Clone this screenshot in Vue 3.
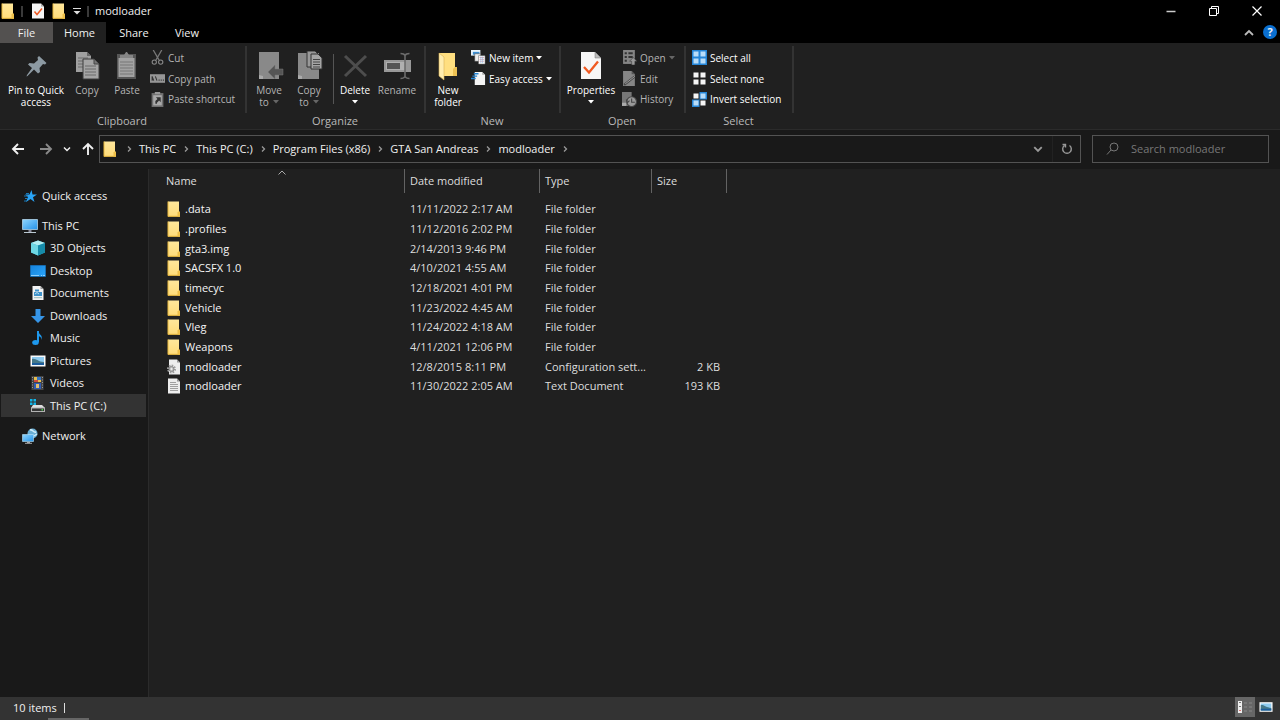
<script setup>
import { ref } from 'vue'

const search = ref('')
const tabs = ['File', 'Home', 'Share', 'View']
const crumbs = ['This PC', 'This PC (C:)', 'Program Files (x86)', 'GTA San Andreas', 'modloader']

const groups = [
  {
    name: 'Clipboard', cls: 'clipboard',
    large: [
      { icon: 'pin', lines: ['Pin to Quick', 'access'], cls: 'wide' },
      { icon: 'copy', lines: ['Copy'], dim: true },
      { icon: 'paste', lines: ['Paste'], dim: true },
    ],
    small: [
      { icon: 'cut', label: 'Cut', dim: true },
      { icon: 'path', label: 'Copy path', dim: true },
      { icon: 'shortcut', label: 'Paste shortcut', dim: true },
    ],
  },
  {
    name: 'Organize', cls: 'organize',
    large: [
      { icon: 'move', lines: ['Move', 'to'], dim: true, caret: true },
      { icon: 'copyto', lines: ['Copy', 'to'], dim: true, caret: true },
      { icon: 'delete', lines: ['Delete', ''], caret: true, cls: 'split' },
      { icon: 'rename', lines: ['Rename'], dim: true, cls: 'rename' },
    ],
    small: [],
  },
  {
    name: 'New', cls: 'new',
    large: [{ icon: 'bigfolder', lines: ['New', 'folder'] }],
    small: [
      { icon: 'newitem', label: 'New item', caret: true },
      { icon: 'easy', label: 'Easy access', caret: true },
    ],
  },
  {
    name: 'Open', cls: 'open',
    large: [{ icon: 'props', lines: ['Properties', ''], caret: true, cls: 'medium' }],
    small: [
      { icon: 'open', label: 'Open', caret: true, dim: true },
      { icon: 'edit', label: 'Edit', dim: true },
      { icon: 'history', label: 'History', dim: true },
    ],
  },
  {
    name: 'Select', cls: 'select',
    large: [],
    small: [
      { icon: 'selall', label: 'Select all' },
      { icon: 'selnone', label: 'Select none' },
      { icon: 'selinv', label: 'Invert selection' },
    ],
  },
]

const places = [
  { icon: '3d', label: '3D Objects' },
  { icon: 'desktop', label: 'Desktop' },
  { icon: 'docs', label: 'Documents' },
  { icon: 'down', label: 'Downloads' },
  { icon: 'music', label: 'Music' },
  { icon: 'pics', label: 'Pictures' },
  { icon: 'video', label: 'Videos' },
  { icon: 'drive', label: 'This PC (C:)', selected: true },
]

const files = [
  ['folder', '.data', '11/11/2022 2:17 AM', 'File folder', ''],
  ['folder', '.profiles', '11/12/2016 2:02 PM', 'File folder', ''],
  ['folder', 'gta3.img', '2/14/2013 9:46 PM', 'File folder', ''],
  ['folder', 'SACSFX 1.0', '4/10/2021 4:55 AM', 'File folder', ''],
  ['folder', 'timecyc', '12/18/2021 4:01 PM', 'File folder', ''],
  ['folder', 'Vehicle', '11/23/2022 4:45 AM', 'File folder', ''],
  ['folder', 'Vleg', '11/24/2022 4:18 AM', 'File folder', ''],
  ['folder', 'Weapons', '4/11/2021 12:06 PM', 'File folder', ''],
  ['config', 'modloader', '12/8/2015 8:11 PM', 'Configuration sett...', '2 KB'],
  ['text', 'modloader', '11/30/2022 2:05 AM', 'Text Document', '193 KB'],
]
</script>

<template>
  <div class="window">
    <svg class="sprite" aria-hidden="true">
      <linearGradient id="g-folder" x1="0" y1="0" x2="0" y2="1">
        <stop offset="0" stop-color="#ffe79b" /><stop offset="1" stop-color="#ffdc7a" />
      </linearGradient>
      <linearGradient id="g-blue" x1="0" y1="0" x2="1" y2="1">
        <stop offset="0" stop-color="#8fd6ff" /><stop offset="1" stop-color="#2492e8" />
      </linearGradient>
      <linearGradient id="g-desk" x1="0" y1="0" x2="1" y2="1">
        <stop offset="0" stop-color="#1683dc" /><stop offset="1" stop-color="#2aa5fa" />
      </linearGradient>
      <symbol id="i-folder" viewBox="0 0 14 16">
        <path d="M1 0.500h11v10.500h1v4.500H1z" fill="url(#g-folder)" />
        <path d="M1 0.500v15M1 15.300h12" stroke="#e9b93f" fill="none" />
        <path d="M10.500 15.500v-4l1-1h1.500v5z" fill="#eebf49" />
      </symbol>
      <symbol id="i-check" viewBox="0 0 14 16">
        <path d="M1 0.500h9l3 3v12H1z" fill="#f5f5f5" /><path d="M10 0.500v3h3" fill="#aaa" />
        <path d="M3.500 8.500l2.500 3 5-6" fill="none" stroke="#ef5b25" stroke-width="1.500" />
      </symbol>
      <symbol id="i-pin" viewBox="0 0 30 30">
        <path d="M18 5l7.500 7-1.500 1.500-2-.5-3.500 4 .5 4-2 1.500-4-4L6.500 25l-1 .5.500-1.500 5-7-4-3.500 1.500-1.500 4.500.5 4-3.500-.5-2.500z" fill="#8d9aa3" />
      </symbol>
      <symbol id="i-copy" viewBox="0 0 30 30">
        <path d="M4 1h11l4 4v16H4z" fill="#a0a0a0" /><path d="M15 1v4h4" fill="#666" />
        <path d="M6 7h10M6 10h10M6 13h10M6 16h10" stroke="#6b6b6b" />
        <path d="M11 8h11l5 5v15H11z" fill="#a5a5a5" stroke="#3c3c3c" /><path d="M22 8v5h5" fill="#777" stroke="#444" />
        <path d="M13 15h11M13 18h11M13 21h11M13 24h11" stroke="#6b6b6b" />
      </symbol>
      <symbol id="i-paste" viewBox="0 0 30 30">
        <path d="M5 3h19v25H5z" fill="#565656" /><path d="M6.500 7h16v19h-16z" fill="#a2a2a2" />
        <path d="M8 7V4h4l2-3h1l2 3h4v3z" fill="#858585" />
        <path d="M8 11h13M8 14h13M8 17h13M8 20h13M8 23h13" stroke="#777" />
      </symbol>
      <symbol id="i-cut" viewBox="0 0 14 14">
        <path d="M3 0l5.500 9.500M11 0L5.500 9.500" stroke="#777" stroke-width="1.200" />
        <circle cx="4" cy="11.300" r="2" fill="none" stroke="#888" /><circle cx="10" cy="11.300" r="2" fill="none" stroke="#888" />
      </symbol>
      <symbol id="i-path" viewBox="0 0 14 14">
        <path d="M0 3h14v8H0z" fill="#969696" /><path d="M2 5l1.500 4M5 5l1.500 4M2 5v4" stroke="#333" />
        <path d="M8 8.500h1M10 8.500h1M12 8.500h1" stroke="#333" />
      </symbol>
      <symbol id="i-shortcut" viewBox="0 0 14 14">
        <path d="M1.500 1h11v13h-11z" fill="#717171" /><path d="M3 3h8v9.500H3z" fill="#aaa" /><path d="M4.500 0h5v2h-5z" fill="#999" />
        <path d="M5 11V8.500l2-2-1.500-1.500H10v4.500L8.500 8l-2 2v1z" fill="#333" />
      </symbol>
      <symbol id="i-move" viewBox="0 0 30 30">
        <path d="M5 1h20v27H5z" fill="#898989" /><path d="M5 24l4 1v3H5z" fill="#aaa" />
        <path d="M14 21l7-7v4h8v6h-8v4z" fill="#555" stroke="#777" stroke-width=".5" />
      </symbol>
      <symbol id="i-copyto" viewBox="0 0 30 30">
        <path d="M4 2h21v26H4z" fill="#898989" /><path d="M4 24l4 1v3H4z" fill="#aaa" />
        <path d="M13 0h8l3 3v13H13z" fill="#999" stroke="#333" /><path d="M17 3h7l4 4v11H17z" fill="#a5a5a5" stroke="#333" />
        <path d="M19 8.500h7M19 11h7M19 13.500h7M19 16h7" stroke="#444" />
      </symbol>
      <symbol id="i-delete" viewBox="0 0 30 30">
        <path d="M5 5l21 20M26 5L5 25" stroke="#4d4d4d" stroke-width="3" />
      </symbol>
      <symbol id="i-rename" viewBox="0 0 30 30">
        <path d="M2 9h27v12H2z" fill="#989898" /><path d="M4 11h19v8H4z" fill="#b0b0b0" /><path d="M5 12h13v6H5z" fill="#555" />
        <path d="M18.500 2.500q3.500 0 4.500 2q1-2 4.500-2M23 4v22M18.500 27.500q3.500 0 4.500-2q1 2 4.500 2" fill="none" stroke="#6b6b6b" stroke-width="1.600" />
      </symbol>
      <symbol id="i-bigfolder" viewBox="0 0 30 30">
        <path d="M6 2h16v14h2v9H11L6 24z" fill="#ffdf80" /><path d="M6 2l5 4v23l-5-4z" fill="#ffedaf" stroke="#d9b254" stroke-width=".6" />
        <path d="M20 25v-7l2-2h2v9z" fill="#eec253" />
      </symbol>
      <symbol id="i-newitem" viewBox="0 0 16 16">
        <path d="M0 0h10v6H0z" fill="#e8f3fb" /><path d="M2 2h7v3H2z" fill="#3d8ed0" />
        <path d="M4 4h6v8H4z" fill="#eee" stroke="#444" stroke-width=".5" /><path d="M8 6h7v9H8z" fill="#fff" stroke="#555" stroke-width=".5" />
        <path d="M9 8h5M9 10h5M9 12h5" stroke="#df8c91" stroke-width=".7" /><path d="M10.500 7v7M12.500 7v7" stroke="#7aaddd" stroke-width=".7" />
      </symbol>
      <symbol id="i-easy" viewBox="0 0 16 16">
        <path d="M4 1h8l3 3v11H4z" fill="#f4f4f4" /><path d="M12 1v3h3" fill="#aaa" />
        <path d="M3 3h5M1.500 5.500h5M0 8h5" stroke="#2484d2" stroke-width="1.500" />
      </symbol>
      <symbol id="i-props" viewBox="0 0 30 30">
        <path d="M5 1h14l6 6v21H5z" fill="#f7f7f7" /><path d="M19 1v6h6z" fill="#bbb" stroke="#777" stroke-width=".5" />
        <path d="M8 16l5 5.500 9-11" stroke="#f05a22" stroke-width="2.300" fill="none" />
      </symbol>
      <symbol id="i-open" viewBox="0 0 14 14">
        <path d="M1 0h11v13H1z" fill="#858585" /><path d="M2.500 2h2v2h-2zM2.500 5.500h2v2h-2zM2.500 9h2v2h-2zM6 2h4v2H6zM6 5.500h4v2H6z" fill="#333" />
        <path d="M10.500 7l3.500 3.500h-2V14H9v-3.500H7z" fill="#999" stroke="#333" stroke-width=".5" />
      </symbol>
      <symbol id="i-edit" viewBox="0 0 14 14">
        <path d="M1 0h8l3 3v11H1z" fill="#858585" /><path d="M9 0v3h3" fill="#555" /><path d="M2 13L12 5" stroke="#444" stroke-width="2" /><path d="M3 12l9-7" stroke="#aaa" stroke-width=".8" />
      </symbol>
      <symbol id="i-history" viewBox="0 0 14 14">
        <path d="M0 0h9v13H0z" fill="#777" /><path d="M0 10h4v3H0z" fill="#aaa" />
        <circle cx="9" cy="9" r="4.500" fill="#999" stroke="#444" /><path d="M9 6v3.500h3M4 7l1 3 2-2" stroke="#444" fill="none" />
      </symbol>
      <symbol id="i-selall" viewBox="0 0 15 15">
        <path d="M0 0h15v15H0z" fill="#2485d7" /><path d="M1.500 1.500h5v5h-5zM8.500 1.500h5v5h-5zM1.500 8.500h5v5h-5zM8.500 8.500h5v5h-5z" fill="#b8dcf8" />
      </symbol>
      <symbol id="i-selnone" viewBox="0 0 15 15">
        <path d="M1.500 1.500h5v5h-5zM8.500 1.500h5v5h-5zM1.500 8.500h5v5h-5zM8.500 8.500h5v5h-5z" fill="#f5f5f5" />
      </symbol>
      <symbol id="i-selinv" viewBox="0 0 15 15">
        <path d="M7.500 0H15v7.500H7.500zM0 7.500h7.500V15H0z" fill="#2485d7" />
        <path d="M1.500 1.500h5v5h-5zM8.500 8.500h5v5h-5z" fill="#f5f5f5" /><path d="M8.500 1.500h5v5h-5zM1.500 8.500h5v5h-5z" fill="#b8dcf8" />
      </symbol>
      <symbol id="i-star" viewBox="0 0 16 16">
        <path d="M9.500 2l1 4.500H15l-4 2.800 1.500 4.700L8.500 11 4 14l2-5-3-2.500h4.500z" fill="#29a4f6" /><path d="M4 5.500h3M2 8h4M3 10.500h3M2 13h3" stroke="#1976b5" />
      </symbol>
      <symbol id="i-pc" viewBox="0 0 16 16">
        <path d="M.5 1.500h15v10H.5z" fill="url(#g-blue)" stroke="#bfe3f8" stroke-width=".7" /><path d="M6.500 12h3v2h-3z" fill="#889" /><path d="M2 14.500h12" stroke="#b9c7d0" />
      </symbol>
      <symbol id="i-3d" viewBox="0 0 16 16">
        <path d="M8 .5l7 2.500v9.500L8 15.500l-7-3V3z" fill="#36b6cf" /><path d="M8 .5L15 3 8 5.500 1 3z" fill="#b2edf2" /><path d="M8 5.500L15 3v9.500l-7 3z" fill="#168ba9" /><path d="M1 3l7 2.500v10l-7-3z" fill="#6dd7e4" />
      </symbol>
      <symbol id="i-desktop" viewBox="0 0 16 16">
        <path d="M.5 2.500h15v11H.5z" fill="url(#g-desk)" stroke="#1675c4" stroke-width=".7" /><path d="M1 12.500h14" stroke="#8ed1ff" stroke-dasharray="8 2 1 1" />
      </symbol>
      <symbol id="i-docs" viewBox="0 0 16 16">
        <path d="M2.500 1h8l3 3v11h-11z" fill="#f2f2f2" /><path d="M10.500 1v3h3" fill="#999" /><path d="M5 4.500h4v2H5zM4 7h8v4H4z" fill="#3f92ca" /><path d="M5 9l2-1.500 2 1.500" stroke="#bde" fill="none" /><path d="M4 12.700h8" stroke="#9bb" />
      </symbol>
      <symbol id="i-down" viewBox="0 0 16 16"><path d="M5.500 1h5v7H15l-7 7-7-7h4.500z" fill="#3695e7" /></symbol>
      <symbol id="i-music" viewBox="0 0 16 16">
        <path d="M8 1v11" stroke="#1e98ed" stroke-width="2" /><ellipse cx="5.500" cy="12.500" rx="3.300" ry="2.500" fill="#1e98ed" /><path d="M8 1c1 4 5 3.500 3.500 9 0-3-2-4-3.500-4z" fill="#1e98ed" />
      </symbol>
      <symbol id="i-pics" viewBox="0 0 16 16">
        <path d="M.5 2.500h15v11H.5z" fill="#fafafa" /><path d="M2 4h12v8H2z" fill="#8ecbf0" /><path d="M2 6c4-1 6 3 12 3v3H2z" fill="#46798a" /><path d="M2 10h12v2H2z" fill="#1b5c9d" />
      </symbol>
      <symbol id="i-video" viewBox="0 0 16 16">
        <path d="M1.500 1h12v14h-12z" fill="#454545" /><path d="M4 2h7v5H4z" fill="#e7bd4d" /><path d="M7 2h4v3H7z" fill="#3776c2" /><path d="M4 5h4v2H4z" fill="#cf493e" /><path d="M4 8h7v6H4z" fill="#315cb5" /><path d="M6 9h3v4H6z" fill="#e0c070" />
        <path d="M2.500 2v12M12.500 2v12" stroke="#999" stroke-dasharray="1 1.500" />
      </symbol>
      <symbol id="i-drive" viewBox="0 0 16 16">
        <path d="M0 1h2.500v2.500H0zM3.500 1H6v2.500H3.500zM0 4.500h2.500V7H0zM3.500 4.500H6V7H3.500z" fill="#12b5e8" />
        <path d="M3 7h9l3 3H1z" fill="#dedede" /><path d="M1 9.500h14v4.500H1z" fill="#b2b2b2" /><path d="M2 10.500h12v2.500H2z" fill="#353535" /><path d="M11.500 11.700h1.500" stroke="#47d447" stroke-width="1.500" />
      </symbol>
      <symbol id="i-network" viewBox="0 0 16 16">
        <circle cx="10.500" cy="5.500" r="5" fill="#6aaed4" /><path d="M8 2c3-1 3 3 6 2M12 8l3-2" stroke="#d0edfa" stroke-width="1.500" fill="none" />
        <path d="M.5 6.500h11v7H.5z" fill="url(#g-blue)" stroke="#b8e4fa" stroke-width=".6" /><path d="M5 14h3v1H5z" fill="#aaa" /><path d="M3 15.300h7" stroke="#aaa" />
      </symbol>
      <symbol id="i-text" viewBox="0 0 14 16">
        <path d="M1 .5h9l3 3v12H1z" fill="#ededed" /><path d="M10 .5v3h3" fill="#999" /><path d="M3 4.500h6M3 6.500h8M3 8.500h8M3 10.500h8M3 12.500h8" stroke="#8b8b8b" stroke-width=".8" />
      </symbol>
      <symbol id="i-config" viewBox="0 0 14 16">
        <path d="M2 .5h8l3 3v12H2z" fill="#ededed" /><path d="M10 .5v3h3" fill="#999" /><circle cx="4.500" cy="10" r="3.500" fill="none" stroke="#9e9e9e" stroke-width="2" stroke-dasharray="1.600 1.100" /><circle cx="4.500" cy="10" r="2.500" fill="#bbb" stroke="#888" /><circle cx="4.500" cy="10" r="1" fill="#eee" />
      </symbol>
      <symbol id="i-arrow" viewBox="0 0 14 14"><path d="M13 7H2M7 2L2 7l5 5" fill="none" stroke="currentColor" stroke-width="1.900" /></symbol>
      <symbol id="i-chev" viewBox="0 0 8 8"><path d="M1 2.500l3 3 3-3" fill="none" stroke="currentColor" stroke-width="1.500" /></symbol>
      <symbol id="i-step" viewBox="0 0 8 8"><path d="M3 1.500l2.500 2.500L3 6.500" fill="none" stroke="currentColor" stroke-width="1.300" /></symbol>
      <symbol id="i-caret" viewBox="0 0 6 4"><path d="M0 0h6L3 3.500z" fill="currentColor" /></symbol>
    </svg>

    <header class="titlebar">
      <svg class="tb-icon"><use href="#i-folder" /></svg>
      <span class="tb-sep"></span>
      <button class="bare" aria-label="Properties"><svg class="tb-icon"><use href="#i-check" /></svg></button>
      <button class="bare" aria-label="New folder"><svg class="tb-icon"><use href="#i-folder" /></svg></button>
      <button class="bare qat" aria-label="Customize Quick Access Toolbar">
        <svg width="8" height="8" viewBox="0 0 8 8"><path d="M0 1.500h8" stroke="#ddd" /><path d="M0.500 4h7L4 7.500z" fill="#ddd" /></svg>
      </button>
      <span class="tb-sep"></span>
      <h1>modloader</h1>
      <div class="controls">
        <button class="bare" aria-label="Minimize"><svg width="12" height="12"><path d="M1.500 6.500h9" stroke="#ccc" stroke-width="1.500" /></svg></button>
        <button class="bare" aria-label="Restore"><svg width="12" height="12" fill="none" stroke="#fff"><path d="M1.500 3.500h7v7h-7zM3.500 3.500v-2h7v7h-2" /></svg></button>
        <button class="bare" aria-label="Close"><svg width="12" height="12"><path d="M1.500 1.500l9 9M10.500 1.500l-9 9" stroke="#fff" stroke-width="1.200" /></svg></button>
      </div>
    </header>

    <nav class="tabs" aria-label="Ribbon tabs">
      <button v-for="t in tabs" :key="t" class="tab" :class="'tab-' + t.toLowerCase()">{{ t }}</button>
      <button class="bare collapse" aria-label="Minimize the Ribbon"><svg width="10" height="10"><path d="M1 7l4-4 4 4" fill="none" stroke="#bbb" stroke-width="1.800" /></svg></button>
      <button class="help" aria-label="Help">?</button>
    </nav>

    <section class="ribbon">
      <section v-for="g in groups" :key="g.name" class="group" :class="g.cls">
        <div class="tools">
          <button v-for="b in g.large" :key="b.icon" class="large" :class="[b.cls, { dim: b.dim }]">
            <svg class="big-icon"><use :href="'#i-' + b.icon" /></svg>
            <span v-for="(l, i) in b.lines" :key="i" class="line">{{ l }}<svg v-if="b.caret && i === 1" class="caret"><use href="#i-caret" /></svg></span>
          </button>
          <div v-if="g.small.length" class="small-list">
            <button v-for="b in g.small" :key="b.icon" class="small" :class="{ dim: b.dim }">
              <svg class="small-icon"><use :href="'#i-' + b.icon" /></svg>{{ b.label }}<svg v-if="b.caret" class="caret"><use href="#i-caret" /></svg>
            </button>
          </div>
        </div>
        <h2>{{ g.name }}</h2>
      </section>
    </section>

    <div class="navbar">
      <div class="arrows">
        <button class="bare" aria-label="Back"><svg width="14" height="14"><use href="#i-arrow" /></svg></button>
        <button class="bare off" aria-label="Forward"><svg class="fwd" width="14" height="14"><use href="#i-arrow" /></svg></button>
        <button class="bare" aria-label="Recent locations"><svg width="8" height="8"><use href="#i-chev" /></svg></button>
        <button class="bare" aria-label="Up"><svg class="up" width="14" height="14"><use href="#i-arrow" /></svg></button>
      </div>
      <div class="address">
        <svg class="tb-icon"><use href="#i-folder" /></svg>
        <svg class="step"><use href="#i-step" /></svg>
        <template v-for="c in crumbs" :key="c">
          <a href="#">{{ c }}</a><svg class="step"><use href="#i-step" /></svg>
        </template>
        <button class="bare previous" aria-label="Previous locations"><svg width="10" height="10"><use href="#i-chev" /></svg></button>
        <button class="bare refresh" aria-label="Refresh">
          <svg width="12" height="12" fill="none" stroke="#999" stroke-width="1.400"><path d="M8.500 2.500a4.300 4.300 0 1 1-5 0M1.500 1.500h3v3" /></svg>
        </button>
      </div>
      <label class="search">
        <svg width="14" height="14" fill="none" stroke="#777"><circle cx="8" cy="5" r="4" /><path d="M5 8l-4 4.500" /></svg>
        <input v-model="search" type="text" placeholder="Search modloader" aria-label="Search modloader" />
      </label>
    </div>

    <div class="body">
      <nav class="sidebar" aria-label="Folders">
        <a href="#" class="place root"><svg><use href="#i-star" /></svg>Quick access</a>
        <div class="tree">
          <a href="#" class="place root"><svg><use href="#i-pc" /></svg>This PC</a>
          <a v-for="p in places" :key="p.label" href="#" class="place" :class="{ selected: p.selected }"><svg><use :href="'#i-' + p.icon" /></svg>{{ p.label }}</a>
        </div>
        <a href="#" class="place root"><svg><use href="#i-network" /></svg>Network</a>
      </nav>
      <main>
        <table>
          <thead>
            <tr>
              <th class="c-name">Name<svg class="sort" width="8" height="5"><path d="M.5 4.500L4 1l3.500 3.500" fill="none" stroke="#aaa" /></svg></th>
              <th class="c-date">Date modified</th>
              <th class="c-type">Type</th>
              <th class="c-size">Size</th>
            </tr>
          </thead>
          <tbody>
            <tr v-for="(f, i) in files" :key="i">
              <td><span class="file"><svg><use :href="'#i-' + f[0]" /></svg>{{ f[1] }}</span></td>
              <td>{{ f[2] }}</td>
              <td>{{ f[3] }}</td>
              <td class="num">{{ f[4] }}</td>
            </tr>
          </tbody>
        </table>
      </main>
    </div>

    <footer class="status">
      <span class="count">10 items</span>
      <button class="bare view active" aria-label="Details">
        <svg width="16" height="14"><path d="M1 1h4v12H1z" fill="#eee" /><path d="M2 2.500h2M2 6.500h2" stroke="#777" /><path d="M2 10.500h2" stroke="#d77" /><path d="M7 3h3M12 3h3M7 7h3M12 7h3M7 11h3M12 11h3" stroke="#888" /></svg>
      </button>
      <button class="bare view" aria-label="Large icons"><svg width="14" height="14"><use href="#i-pics" /></svg></button>
      <span class="edge"></span>
    </footer>
  </div>
</template>

<style>
body { background: #202020; }
</style>

<style scoped>
* { box-sizing: border-box; }
.window {
  height: 100vh;
  display: flex;
  flex-direction: column;
  background: #202020;
  color: #f0f0f0;
  font: 11px/14px "Open Sans", "Noto Sans", sans-serif;
  overflow: hidden;
}
.sprite { position: absolute; width: 0; height: 0; }
svg { flex: none; display: block; }
button { font: inherit; color: inherit; background: none; border: 0; padding: 0; }
a { color: inherit; text-decoration: none; }
h1, h2 { margin: 0; font: inherit; }
.bare { display: flex; align-items: center; justify-content: center; }

.titlebar { display: flex; align-items: center; height: 22px; flex: none; background: #000; padding-left: 1px; }
.tb-icon { width: 14px; height: 16px; }
.tb-sep { width: 2px; height: 11px; background: #3a3a3a; margin: 0 8px 0 6px; }
.titlebar > .bare { margin-right: 7px; }
.titlebar > .qat { margin-right: 0; }
.titlebar h1 { margin-left: -2px; }
.controls { display: flex; margin-left: auto; padding-right: 2px; }
.controls .bare { width: 43px; height: 20px; }

.tabs { display: flex; height: 21px; flex: none; background: #000; align-items: stretch; }
.tab { width: 53px; padding-top: 1px; }
.tab-file { background: #535150; }
.tab-home { background: #202020; }
.tab-share { width: 56px; }
.tab-view { width: 50px; }
.collapse { margin-left: auto; width: 20px; }
.help { width: 14px; height: 14px; border-radius: 7px; background: #0a6fd0; font-weight: 700; line-height: 14px; margin: 3px 3px 0 4px; }

.ribbon { display: flex; flex: none; height: 87px; padding-top: 3px; border-bottom: 1px solid #2b2b2b; font-size: 10px; }
.group { display: flex; flex-direction: column; color: #fff; }
.tools { display: flex; height: 67px; border-right: 2px solid #333; }
.group h2 { color: #b9b9b9; text-align: center; font-size: 11px; line-height: 16px; padding-right: 3px; }
.clipboard { width: 247px; }
.clipboard .tools { padding-left: 5px; }
.organize { width: 179px; }
.organize .tools, .new .tools, .open .tools { padding-left: 2px; }
.new { width: 135px; }
.open { width: 125px; }
.select { width: 108px; }
.select .tools { padding-left: 3px; }
.large { display: flex; flex-direction: column; align-items: center; width: 40px; padding-top: 5px; white-space: nowrap; }
.large.wide { width: 62px; }
.large.medium { width: 56px; }
.large.rename { width: 44px; }
.large.split { margin-left: 6px; position: relative; }
.large.split::before { content: ""; position: absolute; left: -2px; top: 8px; height: 50px; width: 1px; background: #555; }
.big-icon { width: 30px; height: 30px; margin-bottom: 3px; }
.line { display: flex; align-items: center; justify-content: center; gap: 4px; line-height: 12px; min-height: 12px; }
.caret { width: 6px; height: 4px; }
.dim { color: #b5b5b5; }
.dim .caret { color: #666; }
.small-list { display: flex; flex-direction: column; padding: 1px 0 0 3px; }
.small { display: flex; align-items: center; gap: 3px; height: 21px; white-space: nowrap; }
.small:last-child:nth-child(3) { height: 20px; }
.small-icon { width: 15px; height: 15px; }

.navbar { display: flex; align-items: center; flex: none; height: 39px; background: #191919; padding: 0 11px 2px 0; }
.arrows { display: flex; align-items: center; width: 99px; padding-left: 11px; gap: 10px; }
.arrows .bare:first-child { margin-right: 4px; }
.arrows .off { color: #8a8a8a; }
.fwd { transform: rotate(180deg); }
.up { transform: rotate(90deg); }
.address { display: flex; align-items: center; flex: 1; height: 28px; border: 1px solid #535353; padding-left: 3px; }
.address a { white-space: nowrap; }
.step { width: 8px; height: 8px; margin: 0 6px; color: #999; }
.address .tb-icon + .step { margin-left: 8px; }
.previous { margin-left: auto; width: 28px; height: 26px; color: #999; }
.refresh { width: 28px; height: 26px; border-left: 1px solid #222; }
.search { display: flex; align-items: center; width: 177px; height: 28px; margin-left: 11px; border: 1px solid #535353; padding-left: 13px; gap: 11px; }
.search input { flex: 1; min-width: 0; background: none; border: 0; outline: 0; padding: 0; font: inherit; color: #fff; }
.search input::placeholder { color: #777; opacity: 1; }

.body { display: flex; flex: 1; min-height: 0; }
.sidebar { width: 149px; flex: none; background: #191919; border-right: 1px solid #2b2b2b; padding: 16px 2px 0 1px; }
.tree { margin: 8px 0; }
.place { display: flex; align-items: center; gap: 4px; height: 22px; padding-left: 29px; }
.place:nth-child(odd) { height: 23px; }
.place.root { padding-left: 21px; height: 22px; }
.place svg { width: 16px; height: 16px; }
.place.selected { background: #333; }

main { flex: 1; min-width: 0; }
table { border-collapse: separate; border-spacing: 0; table-layout: fixed; width: 578px; }
th { height: 24px; text-align: left; font-weight: 400; color: #dedede; padding: 0 0 0 5px; border-right: 1px solid #636363; position: relative; }
.c-name { width: 256px; padding-left: 17px; }
.c-date { width: 135px; }
.c-type { width: 112px; }
.c-size { width: 75px; }
.sort { position: absolute; top: 1px; left: 129px; }
tbody::before { content: ""; display: block; height: 6px; }
td { height: 20px; padding: 0 7px 0 5px; color: #dedede; white-space: nowrap; }
tr:nth-child(3n) td { height: 19px; }
td:first-child { padding-left: 18px; color: #f5f5f5; }
.file { display: flex; align-items: center; gap: 4px; }
.file svg { width: 14px; height: 16px; }
.num { text-align: right; }

.status { position: relative; display: flex; align-items: flex-start; height: 23px; flex: none; background: #333; padding: 0 4px 0 13px; }
.count { line-height: 22px; margin-right: auto; padding-right: 8px; position: relative; }
.count::after { content: ""; position: absolute; right: 0; top: 6px; width: 1px; height: 10px; background: #ddd; }
.view { width: 20px; height: 20px; }
.view.active { background: #666; margin-right: 1px; }
.edge { position: absolute; left: 48px; bottom: 0; width: 41px; height: 2px; background: #666; }
</style>
